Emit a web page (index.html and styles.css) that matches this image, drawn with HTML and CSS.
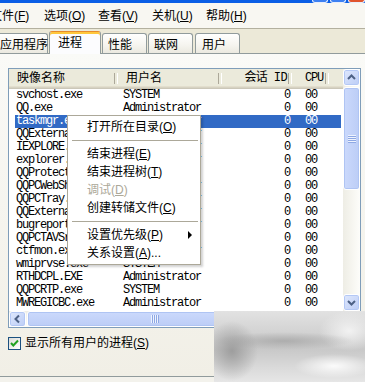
FILE: index.html
```html
<!DOCTYPE html>
<html lang="zh-CN">
<head>
<meta charset="utf-8">
<title>任务管理器</title>
<link rel="stylesheet" href="styles.css">
</head>
<body>
<div class="titlebar">
  <span class="tbb"></span><span class="tbb"></span><span class="tbb close"></span>
</div>
<div class="menubar">
  <span class="mi first">文件(<u>F</u>)</span>
  <span class="mi">选项(<u>O</u>)</span>
  <span class="mi">查看(<u>V</u>)</span>
  <span class="mi">关机(<u>U</u>)</span>
  <span class="mi">帮助(<u>H</u>)</span>
</div>
<div class="tabs">
  <div class="tab first">应用程序</div>
  <div class="tab active">进程</div>
  <div class="tab">性能</div>
  <div class="tab">联网</div>
  <div class="tab last">用户</div>
</div>
<div class="panel">
  <div class="listbox">
    <div class="lv-main">
      <div class="lv-body">
        <div class="lv-head">
          <div class="hc c-name">映像名称</div>
          <div class="hc c-user">用户名</div>
          <div class="hc c-sess">会话 ID</div>
          <div class="hc c-cpu">CPU</div>
          <div class="hc c-fill"></div>
        </div>
        <div class="lv-rows">
          <div class="row"><span class="c-name">svchost.exe</span><span class="c-user">SYSTEM</span><span class="c-sess">0</span><span class="c-cpu">00</span></div>
          <div class="row"><span class="c-name">QQ.exe</span><span class="c-user">Administrator</span><span class="c-sess">0</span><span class="c-cpu">00</span></div>
          <div class="row sel"><span class="c-name">taskmgr.exe</span><span class="c-user">Administrator</span><span class="c-sess">0</span><span class="c-cpu">00</span></div>
          <div class="row"><span class="c-name">QQExternal.exe</span><span class="c-user">Administrator</span><span class="c-sess">0</span><span class="c-cpu">00</span></div>
          <div class="row"><span class="c-name">IEXPLORE.EXE</span><span class="c-user">Administrator</span><span class="c-sess">0</span><span class="c-cpu">00</span></div>
          <div class="row"><span class="c-name">explorer.exe</span><span class="c-user">Administrator</span><span class="c-sess">0</span><span class="c-cpu">00</span></div>
          <div class="row"><span class="c-name">QQProtect.exe</span><span class="c-user">SYSTEM</span><span class="c-sess">0</span><span class="c-cpu">00</span></div>
          <div class="row"><span class="c-name">QQPCWebShield.exe</span><span class="c-user">Administrator</span><span class="c-sess">0</span><span class="c-cpu">00</span></div>
          <div class="row"><span class="c-name">QQPCTray.exe</span><span class="c-user">Administrator</span><span class="c-sess">0</span><span class="c-cpu">00</span></div>
          <div class="row"><span class="c-name">QQExternal.exe</span><span class="c-user">Administrator</span><span class="c-sess">0</span><span class="c-cpu">00</span></div>
          <div class="row"><span class="c-name">bugreport.exe</span><span class="c-user">Administrator</span><span class="c-sess">0</span><span class="c-cpu">00</span></div>
          <div class="row"><span class="c-name">QQPCTAVSrv.exe</span><span class="c-user">SYSTEM</span><span class="c-sess">0</span><span class="c-cpu">00</span></div>
          <div class="row"><span class="c-name">ctfmon.exe</span><span class="c-user">Administrator</span><span class="c-sess">0</span><span class="c-cpu">00</span></div>
          <div class="row"><span class="c-name">wmiprvse.exe</span><span class="c-user">SYSTEM</span><span class="c-sess">0</span><span class="c-cpu">00</span></div>
          <div class="row"><span class="c-name">RTHDCPL.EXE</span><span class="c-user">Administrator</span><span class="c-sess">0</span><span class="c-cpu">00</span></div>
          <div class="row"><span class="c-name">QQPCRTP.exe</span><span class="c-user">SYSTEM</span><span class="c-sess">0</span><span class="c-cpu">00</span></div>
          <div class="row"><span class="c-name">MWREGICBC.exe</span><span class="c-user">Administrator</span><span class="c-sess">0</span><span class="c-cpu">00</span></div>
        </div>
      </div>
      <div class="vscroll">
        <div class="sbtn"><svg width="15" height="15" viewBox="0 0 15 15"><path d="M4 9 L7.5 5.5 L11 9" fill="none" stroke="#4d6185" stroke-width="2"/></svg></div>
        <div class="vthumb"><span class="grip-v"></span></div>
        <div class="vtrack"></div>
        <div class="sbtn"><svg width="15" height="15" viewBox="0 0 15 15"><path d="M4 6 L7.5 9.5 L11 6" fill="none" stroke="#4d6185" stroke-width="2"/></svg></div>
      </div>
    </div>
    <div class="hscroll">
      <div class="sbtn h"><svg width="15" height="14" viewBox="0 0 15 14"><path d="M9 3.5 L5.5 7 L9 10.5" fill="none" stroke="#4d6185" stroke-width="2"/></svg></div>
      <div class="hthumb"><span class="grip-h"></span></div>
      <div class="htrack"></div>
      <div class="sbtn h"><svg width="15" height="14" viewBox="0 0 15 14"><path d="M6 3.5 L9.5 7 L6 10.5" fill="none" stroke="#4d6185" stroke-width="2"/></svg></div>
      <div class="corner"></div>
    </div>
  </div>
  <div class="check">
    <span class="cbox"><svg width="11" height="11" viewBox="0 0 11 11"><path d="M2 5 L4.3 7.5 L9 2.5" fill="none" stroke="#21a121" stroke-width="2"/></svg></span>
    <span class="clabel">显示所有用户的进程(<u>S</u>)</span>
  </div>
</div>

<div class="ctx">
  <div class="ci">打开所在目录(<u>O</u>)</div>
  <div class="csep"></div>
  <div class="ci">结束进程(<u>E</u>)</div>
  <div class="ci">结束进程树(<u>T</u>)</div>
  <div class="ci dis">调试(<u>D</u>)</div>
  <div class="ci">创建转储文件(<u>C</u>)</div>
  <div class="csep"></div>
  <div class="ci sub">设置优先级(<u>P</u>)</div>
  <div class="ci">关系设置(<u>A</u>)...</div>
</div>

<div class="watermark"></div>
</body>
</html>
```

FILE: styles.css
```css
* { box-sizing: border-box; margin: 0; padding: 0; }
html, body { width: 365px; height: 382px; overflow: hidden; }
body {
  margin: 0;
  position: relative;
  background: #f3f2ec;
  font-family: "Liberation Sans", "Noto Sans CJK SC", sans-serif;
  font-size: 12px;
  color: #000;
}
u { text-decoration: underline; text-underline-offset: 1px; }

/* title bar */
.titlebar {
  height: 3px;
  background: #0b5ee6;
  display: flex;
  padding-left: 312px;
  gap: 2px;
  overflow: hidden;
}
.tbb {
  width: 21px;
  height: 3px;
  background: #3d80f2;
  border: 1px solid #e8eefc;
  border-top: none;
  border-radius: 0 0 3px 3px;
}
.tbb.close { background: #e0542d; width: 22px; }

/* menu bar */
.menubar {
  height: 26px;
  display: flex;
  align-items: center;
  background: #f8f7f2;
  border-bottom: 1px solid #b3b09f;
  overflow: hidden;
  white-space: nowrap;
}
.mi { width: 54px; flex: none; padding-left: 6px; line-height: 18px; }
.mi.first { margin-left: -16px; }

/* tabs */
.tabs {
  height: 24px;
  display: flex;
  align-items: flex-end;
  background: #ece9d8;
  white-space: nowrap;
}
.tab {
  flex: none;
  width: 45px;
  height: 20px;
  margin-right: 1px;
  padding: 2px 0 0 5px;
  line-height: 18px;
  border: 1px solid #919b9c;
  border-bottom: none;
  border-radius: 3px 3px 0 0;
  background: linear-gradient(#fffffe, #f6f5f0 55%, #ebe9e0);
}
.tab.first { width: 53px; margin-left: -5px; padding-left: 4px; }
.tab.active {
  width: 52px;
  height: 23px;
  margin-bottom: -1px;
  padding-left: 8px;
  background: #fcfcfe;
  border-top-color: #e68b2c;
  box-shadow: inset 0 2px 0 #ffc83c;
  position: relative;
  z-index: 1;
}
.tab.last { margin-left: 1px; padding-left: 6px; }

/* panel */
.panel {
  width: 380px;
  margin-left: -8px;
  border: 1px solid #919b9c;
  background: linear-gradient(#fafaf7, #f1efe6);
  padding: 14px 0 26px 15px;
}

/* listview */
.listbox {
  width: 353px;
  height: 260px;
  border: 1px solid #7f9db9;
  background: #fff;
  display: flex;
  flex-direction: column;
}
.lv-main { display: flex; height: 242px; }
.lv-body { width: 334px; overflow: hidden; }
.lv-head {
  display: grid;
  grid-template-columns: 109px 104px 70px 37px 14px;
  height: 20px;
  background: #ebeadb;
  box-shadow: inset 0 -1px 0 #cbc7b8, inset 0 -2px 0 #d6d2c2, inset 0 -3px 0 #e2decd;
  line-height: 19px;
  white-space: nowrap;
}
.hc { position: relative; }
.hc::after {
  content: "";
  position: absolute;
  right: 0;
  top: 4px;
  bottom: 5px;
  width: 2px;
  border-left: 1px solid #aca899;
  border-right: 1px solid #fff;
}
.hc.c-fill::after { display: none; }
.lv-head .c-name { padding-left: 8px; }
.lv-head .c-user { padding-left: 8px; }
.lv-head .c-sess { text-align: right; padding-right: 5px; }
.lv-head .c-cpu { padding-left: 13px; font-family: "Liberation Mono", monospace; letter-spacing: -1.2px; }
.lv-head .c-sess { font-family: "Liberation Mono", "Noto Sans CJK SC", monospace; letter-spacing: -0.6px; }

.lv-rows { height: 222px; overflow: hidden; }
.row {
  display: grid;
  grid-template-columns: 109px 104px 70px 37px 14px;
  height: 13px;
  line-height: 13px;
  font-family: "Liberation Mono", monospace;
  font-size: 12px;
  letter-spacing: -1.2px;
  white-space: nowrap;
}
.row span { overflow: hidden; }
.row .c-name { padding-left: 7px; overflow: visible; }
.row .c-user { padding-left: 5px; }
.row .c-sess { text-align: right; padding-right: 2px; }
.row .c-cpu { padding-left: 13px; }
.row.sel {
  color: #fff;
  background: linear-gradient(to right, transparent 6px, #316ac5 6px, #316ac5 332px, transparent 332px);
}

/* scrollbars */
.vscroll {
  width: 17px;
  display: flex;
  flex-direction: column;
  background: linear-gradient(to right, #eeede5, #fdfdfa);
}
.sbtn {
  flex: none;
  width: 17px;
  height: 17px;
  border: 1px solid #fff;
  border-radius: 3px;
  background: linear-gradient(135deg, #dfe8fd, #bccdf6);
  box-shadow: inset 0 0 0 1px #b4c8f5;
  display: flex;
  align-items: center;
  justify-content: center;
}
.vthumb {
  flex: none;
  margin-top: 1px;
  height: 103px;
  border: 1px solid #fff;
  border-radius: 3px;
  background: linear-gradient(to right, #cbd9fc, #bccdf6);
  box-shadow: inset 0 0 0 1px #afc4f3;
  display: flex;
  align-items: center;
  justify-content: center;
}
.grip-v {
  width: 8px;
  height: 8px;
  background: repeating-linear-gradient(#eef3fe 0 1px, #8ea8e4 1px 2px);
}
.vtrack { flex: 1; }
.hscroll {
  height: 16px;
  display: flex;
  background: linear-gradient(#eeede5, #fdfdfa);
}
.sbtn.h { height: 16px; }
.hthumb {
  flex: none;
  margin-left: 1px;
  width: 256px;
  border: 1px solid #fff;
  border-radius: 3px;
  background: linear-gradient(#cbd9fc, #bccdf6);
  box-shadow: inset 0 0 0 1px #afc4f3;
  display: flex;
  align-items: center;
  justify-content: center;
}
.grip-h {
  width: 8px;
  height: 8px;
  background: repeating-linear-gradient(to right, #eef3fe 0 1px, #8ea8e4 1px 2px);
}
.htrack { flex: 1; }
.corner { width: 17px; background: #ece9d8; }

/* checkbox */
.check {
  margin-top: 9px;
  height: 13px;
  display: flex;
  align-items: center;
  gap: 4px;
  white-space: nowrap;
}
.cbox {
  width: 13px;
  height: 13px;
  border: 1px solid #1c5180;
  background: linear-gradient(135deg, #dcdcd7, #fff);
  display: flex;
}
.clabel { line-height: 13px; }

/* context menu */
.ctx {
  position: absolute;
  left: 67px;
  top: 115px;
  width: 134px;
  height: 150px;
  background: #fff;
  border: 1px solid #aca899;
  padding: 2px 0;
  box-shadow: 2px 2px 2px rgba(0, 0, 0, 0.18);
  white-space: nowrap;
}
.ci {
  height: 18px;
  line-height: 18px;
  padding-left: 19px;
  position: relative;
}
.ci.dis { color: #aca899; text-shadow: 1px 1px 0 #fff; }
.ci.sub::after {
  content: "";
  position: absolute;
  right: 8px;
  top: 5px;
  border-left: 4px solid #000;
  border-top: 4px solid transparent;
  border-bottom: 4px solid transparent;
}
.csep {
  height: 9px;
  display: flex;
  align-items: center;
  padding: 0 2px 0 4px;
}
.csep::before { content: ""; flex: 1; border-top: 1px solid #aca899; }

/* blurred watermark patch */
.watermark {
  position: absolute;
  left: 214px;
  top: 311px;
  width: 151px;
  height: 71px;
  background:
    radial-gradient(ellipse 26px 30px at 18px 40px, rgba(150,150,150,0.85), rgba(150,150,150,0) 100%),
    radial-gradient(ellipse 70px 9px at 70px 30px, rgba(165,165,165,0.8), rgba(165,165,165,0) 100%),
    radial-gradient(ellipse 40px 12px at 120px 55px, rgba(255,255,255,0.9), rgba(255,255,255,0) 100%),
    radial-gradient(ellipse 30px 20px at 135px 20px, rgba(245,245,245,0.9), rgba(245,245,245,0) 100%),
    linear-gradient(#e2e2e2, #d0d0d0 35%, #c9c9c9 55%, #dadada 80%, #e6e6e6);
}
```
